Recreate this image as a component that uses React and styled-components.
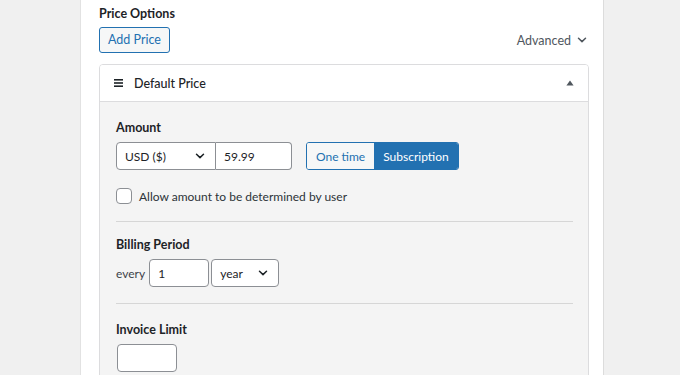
import React from "react";
import styled, { createGlobalStyle } from "styled-components";

const Global = createGlobalStyle`
  html, body { margin: 0; padding: 0; }
  body {
    background: #f0f0f0;
    font-family: "Lato", "Noto Sans", sans-serif;
    font-size: 12px;
    color: #1d2327;
  }
  * { box-sizing: border-box; }
`;

const Page = styled.div`
  display: flex;
  min-height: 375px;
  height: 375px;
  overflow: hidden;
`;

const Panel = styled.div`
  margin-left: 80px;
  width: 524px;
  background: #fff;
  border-left: 1px solid #e2e2e2;
  border-right: 1px solid #dcdcdc;
  padding: 4px 14px 0 18px;
`;

const Title = styled.div`
  font-weight: 700;
  font-size: 12.5px;
  line-height: 20px;
`;

const TopRow = styled.div`
  display: flex;
  align-items: center;
  justify-content: space-between;
  margin-top: 3px;
`;

const Button = styled.button`
  font-family: inherit;
  font-size: 12.5px;
  height: 26px;
  padding: 0 8px;
  border: 1px solid #2271b1;
  border-radius: 3px;
  background: #f6f7f7;
  color: #2271b1;
  line-height: 24px;
`;

const Advanced = styled.div`
  display: flex;
  align-items: center;
  gap: 6px;
  font-size: 12.5px;
  color: #50575e;
  margin-right: 2px;
`;

const Card = styled.div`
  margin-top: 11px;
  border: 1px solid #dcdcde;
  border-radius: 4px;
  overflow: hidden;
`;

const CardHeader = styled.div`
  height: 37px;
  background: #fff;
  border-bottom: 1px solid #dcdcde;
  display: flex;
  align-items: center;
  padding: 0 14px 0 14px;
  gap: 11px;
`;

const HeaderTitle = styled.div`
  flex: 1;
  font-size: 12.5px;
  font-weight: 500;
  color: #1d2327;
`;

const CardBody = styled.div`
  background: #f4f4f4;
  padding: 0 15px 0 16px;
  min-height: 300px;
`;

const Section = styled.div`
  padding: ${(p) => p.$top}px 0 16px;
  border-bottom: ${(p) => (p.$last ? "none" : "1px solid #d6d6d6")};
`;

const Label = styled.div`
  font-weight: 700;
  font-size: 12.5px;
  line-height: 20px;
  margin-bottom: 4px;
`;

const Row = styled.div`
  display: flex;
  align-items: center;
`;

const Joined = styled.div`
  display: flex;
  margin-right: 14px;
`;

const SelectBox = styled.div`
  width: ${(p) => p.$w}px;
  height: 28px;
  display: flex;
  align-items: center;
  justify-content: space-between;
  padding: 0 10px 0 8px;
  background: #fff;
  border: 1px solid #8c8f94;
  border-radius: ${(p) => p.$radius || "4px"};
  color: #1d2327;
  margin-left: ${(p) => p.$ml || 0}px;
`;

const Input = styled.div`
  width: ${(p) => p.$w}px;
  height: 28px;
  display: flex;
  align-items: center;
  padding: 0 8px;
  background: #fff;
  border: 1px solid #8c8f94;
  border-left-width: ${(p) => (p.$joined ? 0 : 1)}px;
  border-radius: ${(p) => p.$radius || "4px"};
  color: #1d2327;
  margin-left: ${(p) => p.$ml || 0}px;
`;

const Toggle = styled.div`
  display: flex;
  height: 28px;
  border: 1px solid #2271b1;
  border-radius: 3px;
  overflow: hidden;
`;

const ToggleItem = styled.div`
  display: flex;
  align-items: center;
  padding: 0 9px;
  background: ${(p) => (p.$active ? "#2271b1" : "#f6f7f7")};
  color: ${(p) => (p.$active ? "#fff" : "#2271b1")};
`;

const CheckRow = styled.label`
  display: flex;
  align-items: center;
  gap: 7px;
  margin-top: 18px;
  margin-bottom: 1px;
  color: #2c3338;
`;

const Check = styled.span`
  width: 16px;
  height: 16px;
  border: 1px solid #8c8f94;
  border-radius: 4px;
  background: #fff;
`;

const Every = styled.span`
  color: #3c434a;
  margin-right: 4px;
`;

const Chevron = ({ color = "#1d2327", size = 10 }) => (
  <svg width={size} height={size} viewBox="0 0 10 10" fill="none">
    <path d="M1.5 3.2 L5 6.6 L8.5 3.2" stroke={color} strokeWidth="1.5" strokeLinecap="round" strokeLinejoin="round" />
  </svg>
);

const Hamburger = () => (
  <svg width="9" height="8" viewBox="0 0 9 8">
    <rect x="0" y="0" width="9" height="1.6" fill="#1d2327" />
    <rect x="0" y="3.2" width="9" height="1.6" fill="#1d2327" />
    <rect x="0" y="6.4" width="9" height="1.6" fill="#1d2327" />
  </svg>
);

const Caret = () => (
  <svg width="8" height="6" viewBox="0 0 8 6">
    <path d="M4 0.5 L7.6 5.5 L0.4 5.5 Z" fill="#50575e" />
  </svg>
);

export default function App() {
  return (
    <>
      <Global />
      <Page>
        <Panel>
          <Title>Price Options</Title>
          <TopRow>
            <Button>Add Price</Button>
            <Advanced>
              Advanced <Chevron color="#50575e" />
            </Advanced>
          </TopRow>
          <Card>
            <CardHeader>
              <Hamburger />
              <HeaderTitle>Default Price</HeaderTitle>
              <Caret />
            </CardHeader>
            <CardBody>
              <Section $top={16}>
                <Label>Amount</Label>
                <Row>
                  <Joined>
                    <SelectBox $w={100} $radius="4px 0 0 4px">
                      USD ($) <Chevron />
                    </SelectBox>
                    <Input $w={76} $joined $radius="0 4px 4px 0">59.99</Input>
                  </Joined>
                  <Toggle>
                    <ToggleItem>One time</ToggleItem>
                    <ToggleItem $active>Subscription</ToggleItem>
                  </Toggle>
                </Row>
                <CheckRow>
                  <Check />
                  Allow amount to be determined by user
                </CheckRow>
              </Section>
              <Section $top={13}>
                <Label>Billing Period</Label>
                <Row>
                  <Every>every</Every>
                  <Input $w={60}>1</Input>
                  <SelectBox $w={68} $ml={2}>
                    year <Chevron />
                  </SelectBox>
                </Row>
              </Section>
              <Section $top={16} $last>
                <Label>Invoice Limit</Label>
                <Input $w={60} $ml={1} />
              </Section>
            </CardBody>
          </Card>
        </Panel>
      </Page>
    </>
  );
}
